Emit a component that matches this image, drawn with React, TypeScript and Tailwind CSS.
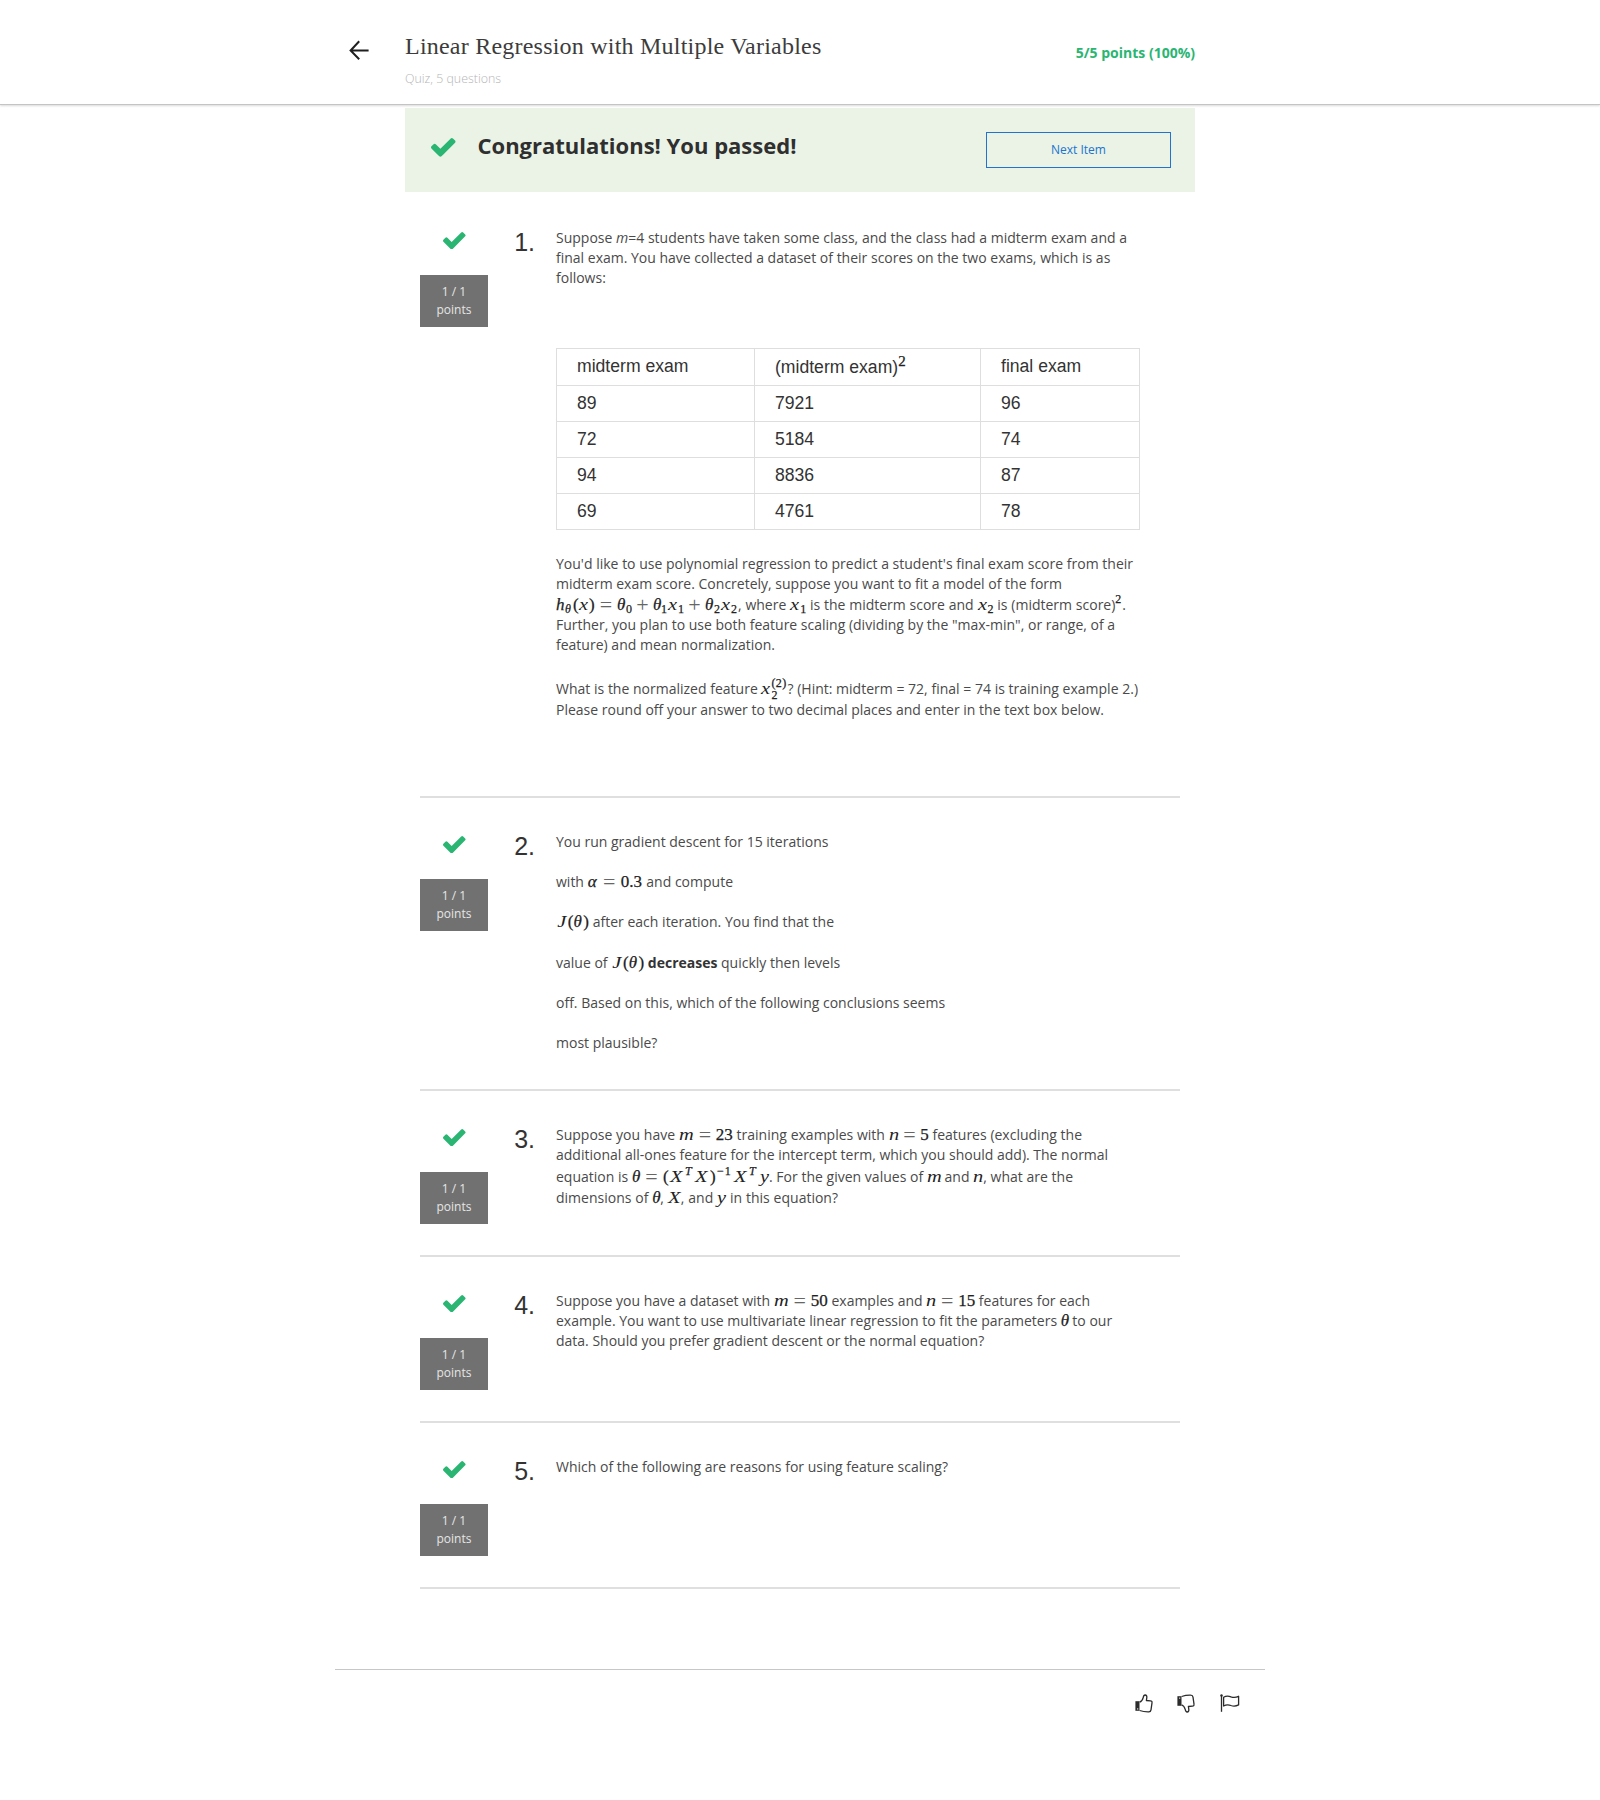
import React from "react";

type Kids = { children?: React.ReactNode; className?: string };

/* ---------- icons ---------- */

function Check({ className = "" }: { className?: string }) {
  return (
    <svg viewBox="121 334 1550 1188" className={className} fill="#2ab573" aria-hidden="true">
      <path d="M1671 566q0 40-28 68l-724 724-136 136q-28 28-68 28t-68-28l-136-136-362-362q-28-28-28-68t28-68l136-136q28-28 68-28t68 28l294 295 656-657q28-28 68-28t68 28l136 136q28 28 28 68z" />
    </svg>
  );
}

function BackArrow() {
  return (
    <svg viewBox="0 0 20 20" className="h-5 w-5" fill="none" stroke="#1f1f1f" strokeWidth="2" aria-hidden="true">
      <path d="M10.2 1.2 1.6 10.500l8.6 8.8M1.6 10.500h18" />
    </svg>
  );
}

function Thumb({ className = "" }: { className?: string }) {
  return (
    <svg viewBox="0 0 18 19" className={className} aria-hidden="true">
      <path d="M0.4 7.2h4.1v9.6H0.4z" fill="#2b2b2b" />
      <circle cx="2.7" cy="14.9" r="0.7" fill="#fff" />
      <path
        d="M4.6 8.2C6.6 7.6 7.6 5.8 8.2 3.6 8.5 2 8.9 1 10.1 1c1.5 0 1.9 1.3 1.7 2.7L11.4 6.5l4 .3c1.3.1 1.8.9 1.6 2l-1 7.1c-.2 1.3-.9 2-2.2 2-3.3.1-6.3-.4-9.2-1.4"
        fill="none"
        stroke="#2b2b2b"
        strokeWidth="1.3"
        strokeLinejoin="round"
      />
    </svg>
  );
}

function Flag() {
  return (
    <svg viewBox="0 0 20 18" className="ml-px h-[18px] w-5" fill="none" stroke="#2b2b2b" aria-hidden="true">
      <path d="M1.5 1v16.8" strokeWidth="1.3" />
      <circle cx="1.5" cy="1.5" r="1.2" fill="#2b2b2b" stroke="none" />
      <path
        d="M3.6 3.2c3-1.8 5.2-1.3 7.4-.4 2.4.9 4.6.9 7.6-.5v8.6c-3 1.5-5.2 1.5-7.6.6-2.2-.9-4.4-1.3-7.4.5z"
        strokeWidth="1.3"
        strokeLinejoin="round"
      />
    </svg>
  );
}

/* ---------- math typesetting ---------- */

function M({ children, className = "" }: Kids) {
  return (
    <span
      className={`inline-flex items-baseline whitespace-nowrap font-['Liberation_Serif',serif] text-[17px] leading-none tracking-normal text-[#222] [-webkit-text-stroke:0.25px_#222] [text-align-last:left] ${className}`}
    >
      {children}
    </span>
  );
}

/* Latin variables are set wide; Greek ones keep their natural width. */
function V({ children, className = "" }: Kids) {
  return (
    <span className={`origin-left scale-x-[1.2] italic [-webkit-text-stroke:0] ${className}`}>{children}</span>
  );
}

function G({ children, className = "" }: Kids) {
  return <span className={`italic ${className}`}>{children}</span>;
}

function Op({ children, className = "" }: Kids) {
  return (
    <span
      className={`relative top-[2px] text-[22px] leading-[0.7] text-[#666] [-webkit-text-stroke:0] [text-align-last:center] ${className}`}
    >
      {children}
    </span>
  );
}

function Sub({ children, className = "" }: Kids) {
  return <span className={`relative top-[3px] text-[12px] ${className}`}>{children}</span>;
}

function SubLow({ children }: Kids) {
  return <span className="relative top-[5px] w-0 text-[12px]">{children}</span>;
}

function Sup({ children, className = "" }: Kids) {
  return <span className={`relative top-[-7px] text-[12px] ${className}`}>{children}</span>;
}

/* ---------- page pieces ---------- */

function Line({ children, className = "" }: Kids) {
  return <div className={`h-5 whitespace-nowrap leading-5 [text-align-last:justify] ${className}`}>{children}</div>;
}

function Question({ n, children, className = "" }: Kids & { n: number }) {
  return (
    <section className={`mx-[15px] flex border-b-2 border-[#dfdfdf] ${className}`}>
      <div className="flex w-[68px] shrink-0 flex-col items-center pt-[37.5px]">
        <Check className="ml-[0.5px] h-[17.3px] w-[22.6px]" />
        <div className="mt-[26.2px] h-[52px] w-full bg-[#717171] pt-[8px] text-center text-[12px] leading-[18px] text-[#e6e6e6]">
          <div>1 / 1</div>
          <div>points</div>
        </div>
      </div>
      <div className="w-[47px] shrink-0 pt-[34px] text-right font-['Liberation_Sans',sans-serif] text-[25px] leading-[28px] text-[#333]">
        {n}.
      </div>
      <div className="ml-[21px] pt-[34px] text-[14px] text-[#4a4a4a]">{children}</div>
    </section>
  );
}

const rows = [
  ["89", "7921", "96"],
  ["72", "5184", "74"],
  ["94", "8836", "87"],
  ["69", "4761", "78"],
];

function ScoreTable() {
  return (
    <div className="mt-[60px] grid w-[584px] grid-cols-[198px_226px_159px] border-l border-t border-[#dedede] font-['Liberation_Sans',sans-serif] text-[17.6px] text-[#333]">
      {["midterm exam", "sq", "final exam"].map((h) => (
        <div key={h} className="h-[37px] border-b border-r border-[#dedede] pl-5 leading-[35px]">
          {h === "sq" ? (
            <span className="relative top-px">
              (midterm exam)
              <M>
                <span className="relative top-[-7px] text-[15px]">2</span>
              </M>
            </span>
          ) : (
            h
          )}
        </div>
      ))}
      {rows.flat().map((v) => (
        <div key={v} className="h-9 border-b border-r border-[#dedede] pl-5 leading-[35px]">
          {v}
        </div>
      ))}
    </div>
  );
}

function JTheta() {
  return (
    <M className="w-[33px]">
      <V className="w-[12px] pl-px">J</V>
      <span className="w-[6px]">(</span>
      <G className="w-[10px]">θ</G>
      <span>)</span>
    </M>
  );
}

export default function App() {
  return (
    <div className="min-h-[1800px] bg-white font-['Open_Sans',sans-serif]">
      <header className="h-[105px] border-b border-[#c4c4c4] shadow-[0_1px_2px_rgba(0,0,0,0.15)]">
        <div className="mx-auto flex w-[902px] pr-[56px]">
          <div className="w-[56px] pt-[40px]">
            <BackArrow />
          </div>
          <div className="flex-1 pt-[32px]">
            <h1 className="font-['Liberation_Serif',serif] text-[24px] leading-[28px] tracking-[0.22px] text-[#3c3c3c]">
              Linear Regression with Multiple Variables
            </h1>
            <div className="mt-[10px] text-[12.4px] font-light leading-[18px] text-[#b5b5b5]">Quiz, 5 questions</div>
          </div>
          <div className="pt-[43px] text-[14px] font-bold leading-[20px] text-[#2ab573]">5/5 points (100%)</div>
        </div>
      </header>

      <main className="mx-auto mt-[3px] w-[790px]">
        <div className="flex h-[84px] bg-[#eaf3e6] pl-[26px] pr-6">
          <Check className="mt-[30px] h-[18.8px] w-[24.5px]" />
          <h2 className="ml-[22px] flex-1 pt-[21px] text-[22px] font-bold leading-[32px] text-[#2f2f2f]">
            Congratulations! You passed!
          </h2>
          <button className="mt-6 h-9 w-[185px] border border-[#2073d0] text-[12px] text-[#2073d0]">Next Item</button>
        </div>

        <div className="h-[2px]" />

        <Question n={1} className="h-[604px]">
          <Line className="w-[571px]">
            Suppose <i>m</i>=4 students have taken some class, and the class had a midterm exam and a
          </Line>
          <Line className="w-[554px]">final exam. You have collected a dataset of their scores on the two exams, which is as</Line>
          <Line className="w-[50px]">follows:</Line>
          <ScoreTable />
          <Line className="mt-[24px] w-[577px]">
            You'd like to use polynomial regression to predict a student's final exam score from their
          </Line>
          <Line className="w-[506px]">midterm exam score. Concretely, suppose you want to fit a model of the form</Line>
          <Line className="mt-px w-[570px]">
            <M className="w-[182px]">
              <G className="w-[9px]">h</G>
              <Sub className="w-[8px] italic">θ</Sub>
              <span className="w-[6px]">(</span>
              <V className="w-[10px]">x</V>
              <span className="w-[6px]">)</span>
              <Op className="w-[22px]">=</Op>
              <G className="w-[9px]">θ</G>
              <Sub className="w-[6px]">0</Sub>
              <Op className="w-[21px]">+</Op>
              <G className="w-[8px]">θ</G>
              <Sub className="w-[7px]">1</Sub>
              <V className="w-[10px]">x</V>
              <Sub className="w-[6px]">1</Sub>
              <Op className="w-[21px]">+</Op>
              <G className="w-[9px]">θ</G>
              <Sub className="w-[7px]">2</Sub>
              <V className="w-[10px]">x</V>
              <Sub>2</Sub>
            </M>
            , where{" "}
            <M className="w-[16px]">
              <V className="w-[10px]">x</V>
              <Sub>1</Sub>
            </M>{" "}
            is the midterm score and{" "}
            <M className="w-[16px]">
              <V className="w-[10px]">x</V>
              <Sub>2</Sub>
            </M>{" "}
            is (midterm score)
            <M className="w-[7px]">
              <Sup>2</Sup>
            </M>
            .
          </Line>
          <Line className="w-[559px]">Further, you plan to use both feature scaling (dividing by the "max-min", or range, of a</Line>
          <Line className="w-[219px]">feature) and mean normalization.</Line>
          <Line className="mt-[24px] w-[582px]">
            What is the normalized feature{" "}
            <M className="w-[26px]">
              <V className="w-[10px]">x</V>
              <SubLow>2</SubLow>
              <Sup className="tracking-[0.4px]">(2)</Sup>
            </M>
            ? (Hint: midterm = 72, final = 74 is training example 2.)
          </Line>
          <Line className="mt-px w-[548px]">Please round off your answer to two decimal places and enter in the text box below.</Line>
        </Question>

        <Question n={2} className="h-[293px]">
          <Line className="w-[272px]">You run gradient descent for 15 iterations</Line>
          <Line className="mt-5 w-[177px]">
            with{" "}
            <M className="w-[55px]">
              <G className="w-[10px]">α</G>
              <Op className="w-[23px]">=</Op>
              <span>0.3</span>
            </M>{" "}
            and compute
          </Line>
          <Line className="mt-5 w-[278px]">
            <JTheta /> after each iteration. You find that the
          </Line>
          <Line className="mt-[21px] w-[284px]">
            value of <JTheta /> <b className="text-[#333]">decreases</b> quickly then levels
          </Line>
          <Line className="mt-5 w-[389px]">off. Based on this, which of the following conclusions seems</Line>
          <Line className="mt-5 w-[101px]">most plausible?</Line>
        </Question>

        <Question n={3} className="h-[166px]">
          <Line className="w-[526px]">
            Suppose you have{" "}
            <M className="w-[54px]">
              <V className="w-[15px]">m</V>
              <Op className="w-[22px]">=</Op>
              <span>23</span>
            </M>{" "}
            training examples with{" "}
            <M className="w-[40px]">
              <V className="w-[10px]">n</V>
              <Op className="w-[22px]">=</Op>
              <span>5</span>
            </M>{" "}
            features (excluding the
          </Line>
          <Line className="w-[552px]">additional all-ones feature for the intercept term, which you should add). The normal</Line>
          <Line className="mt-[2px] w-[517px]">
            equation is{" "}
            <M className="w-[137px]">
              <G className="w-[8px]">θ</G>
              <Op className="w-[23px]">=</Op>
              <span className="w-[7px]">(</span>
              <V className="w-[15px]">X</V>
              <Sup className="w-[10px] italic">T</Sup>
              <V className="w-[15px]">X</V>
              <span className="w-[7px]">)</span>
              <Sup className="w-[17px] tracking-[1px]">−1</Sup>
              <V className="w-[15px]">X</V>
              <Sup className="w-[11px] italic">T</Sup>
              <V>y</V>
            </M>
            . For the given values of{" "}
            <M className="w-[14px]">
              <V>m</V>
            </M>{" "}
            and{" "}
            <M className="w-[10px]">
              <V>n</V>
            </M>
            , what are the
          </Line>
          <Line className="mt-px w-[282px]">
            dimensions of{" "}
            <M className="w-[8px]">
              <G>θ</G>
            </M>
            ,{" "}
            <M className="w-[13px]">
              <V>X</V>
            </M>
            , and{" "}
            <M className="w-[9px]">
              <V>y</V>
            </M>{" "}
            in this equation?
          </Line>
        </Question>

        <Question n={4} className="h-[166px]">
          <Line className="w-[534px]">
            Suppose you have a dataset with{" "}
            <M className="w-[54px]">
              <V className="w-[15px]">m</V>
              <Op className="w-[22px]">=</Op>
              <span>50</span>
            </M>{" "}
            examples and{" "}
            <M className="w-[49px]">
              <V className="w-[10px]">n</V>
              <Op className="w-[22px]">=</Op>
              <span>15</span>
            </M>{" "}
            features for each
          </Line>
          <Line className="w-[556px]">
            example. You want to use multivariate linear regression to fit the parameters{" "}
            <M className="w-[8px]">
              <G>θ</G>
            </M>{" "}
            to our
          </Line>
          <Line className="w-[428px]">data. Should you prefer gradient descent or the normal equation?</Line>
        </Question>

        <Question n={5} className="h-[166px]">
          <Line className="w-[392px]">Which of the following are reasons for using feature scaling?</Line>
        </Question>
      </main>

      <footer className="mx-auto mt-20 flex w-[930px] justify-end gap-[24px] border-t border-[#c7c7c7] pr-[25px] pt-[24px]">
        <Thumb className="h-[19px] w-[18px]" />
        <Thumb className="h-[19px] w-[18px] -scale-y-100" />
        <Flag />
      </footer>
    </div>
  );
}
